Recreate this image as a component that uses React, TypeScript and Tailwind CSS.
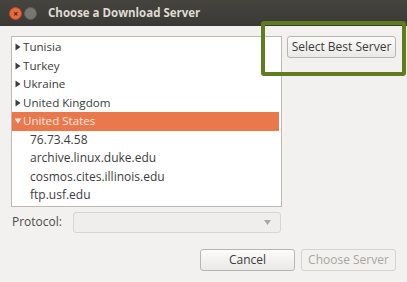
import React from "react";

const font = { fontFamily: '"Open Sans", "Noto Sans", sans-serif' };

function RightTri() {
  return (
    <svg width="6" height="8" viewBox="0 0 6 8" className="shrink-0">
      <path d="M0.5 0.5 L5.5 4 L0.5 7.5 Z" fill="#3c3c3c" />
    </svg>
  );
}

function DownTri() {
  return (
    <svg width="8" height="6" viewBox="0 0 8 6" className="shrink-0">
      <path d="M0.5 0.5 L7.5 0.5 L4 5.5 Z" fill="#fbe9e1" />
    </svg>
  );
}

export default function App() {
  const countries = ["Tunisia", "Turkey", "Ukraine", "United Kingdom"];
  const servers = ["76.73.4.58", "archive.linux.duke.edu", "cosmos.cites.illinois.edu", "ftp.usf.edu"];
  return (
    <div
      className="relative w-[407px] h-[282px] overflow-hidden bg-[#f2f1f0] text-[#3c3c3c] text-[12px]"
      style={font}
    >
      {/* title bar */}
      <div className="h-[26px] bg-gradient-to-b from-[#45443f] to-[#3a3935] flex items-center pl-[9px]">
        <div className="w-[13px] h-[13px] rounded-full bg-[#e9693a] border border-[#b24e2a] flex items-center justify-center text-[#3a2a22] text-[9px] font-bold leading-none">
          ×
        </div>
        <div className="ml-[2px] w-[13px] h-[13px] rounded-full bg-[#77766f] border border-[#5e5d58]" />
        <div className="ml-[11px] text-[#dfdbd2] font-bold text-[11.5px] leading-none">
          Choose a Download Server
        </div>
      </div>

      {/* main area */}
      <div className="flex pl-[11px] pt-[10px]">
        <div className="w-[271px] h-[171px] bg-white border border-[#bdb9b3] pt-[1px] overflow-hidden">
          {countries.map((c) => (
            <div key={c} className="h-[18.5px] flex items-center pl-[3px] gap-[2px]">
              <RightTri />
              <span className="leading-none text-[11.6px]">{c}</span>
            </div>
          ))}
          <div className="h-[18.5px] flex items-center pl-[2px] gap-[1px] bg-[#e9784c] mr-[2px] text-[#fbe9e1]">
            <DownTri />
            <span className="leading-none text-[11.6px]">United States</span>
          </div>
          {servers.map((s) => (
            <div key={s} className="h-[18.5px] flex items-center pl-[18px]">
              <span className="leading-none">{s}</span>
            </div>
          ))}
        </div>
        <div className="ml-[5px]">
          <button className="w-[109px] h-[22px] rounded-[3px] border border-[#b9b5ae] bg-gradient-to-b from-[#fbfbfa] to-[#ebe9e7] text-[12px] text-[#3c3c3c] leading-none">
            Select Best Server
          </button>
        </div>
      </div>

      {/* protocol row */}
      <div className="flex items-center pl-[12px] mt-[4px] h-[22px]">
        <span className="w-[61px] text-[#4c4c4c]">Protocol:</span>
        <div className="w-[208px] h-[21px] rounded-[3px] border border-[#d8d5d0] bg-[#efeeec] flex items-center justify-end pr-[9px]">
          <svg width="7" height="5" viewBox="0 0 7 5">
            <path d="M0 0 L7 0 L3.5 5 Z" fill="#aaa7a2" />
          </svg>
        </div>
      </div>

      {/* buttons */}
      <div className="flex justify-end gap-[6px] pr-[11px] mt-[16px]">
        <button className="w-[95px] h-[22px] rounded-[3px] border border-[#b9b5ae] bg-gradient-to-b from-[#fbfbfa] to-[#ebe9e7] text-[#3c3c3c] leading-none">
          Cancel
        </button>
        <button className="w-[95px] h-[22px] rounded-[3px] border border-[#d6d3ce] bg-[#f2f1f0] text-[#a9a6a1] leading-none">
          Choose Server
        </button>
      </div>

      {/* green annotation box */}
      <div className="absolute left-[261px] top-[21px] w-[145px] h-[55px] border-[4px] border-[#5f7d1e] rounded-[3px]" />
    </div>
  );
}
